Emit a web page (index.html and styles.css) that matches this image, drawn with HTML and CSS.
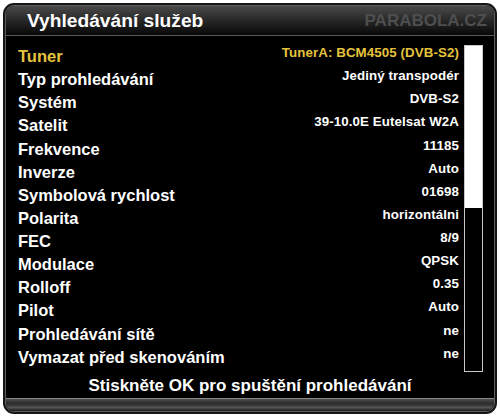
FILE: index.html
```html
<!DOCTYPE html>
<html lang="cs">
<head>
<meta charset="utf-8">
<title>Vyhledávání služeb</title>
<link rel="stylesheet" href="styles.css">
</head>
<body>
<div class="frame">
  <div class="inner">
    <div class="header">
      <span class="title">Vyhledávání služeb</span>
      <span class="brand">PARABOLA.CZ</span>
    </div>
    <div class="main">
      <div class="list">
        <div class="row active"><span class="label">Tuner</span><span class="value">TunerA: BCM4505 (DVB-S2)</span></div>
        <div class="row"><span class="label">Typ prohledávání</span><span class="value">Jediný transpodér</span></div>
        <div class="row"><span class="label">Systém</span><span class="value">DVB-S2</span></div>
        <div class="row"><span class="label">Satelit</span><span class="value">39-10.0E Eutelsat W2A</span></div>
        <div class="row"><span class="label">Frekvence</span><span class="value">11185</span></div>
        <div class="row"><span class="label">Inverze</span><span class="value">Auto</span></div>
        <div class="row"><span class="label">Symbolová rychlost</span><span class="value">01698</span></div>
        <div class="row"><span class="label">Polarita</span><span class="value">horizontálni</span></div>
        <div class="row"><span class="label">FEC</span><span class="value">8/9</span></div>
        <div class="row"><span class="label">Modulace</span><span class="value">QPSK</span></div>
        <div class="row"><span class="label">Rolloff</span><span class="value">0.35</span></div>
        <div class="row"><span class="label">Pilot</span><span class="value">Auto</span></div>
        <div class="row"><span class="label">Prohledávání sítě</span><span class="value">ne</span></div>
        <div class="row"><span class="label">Vymazat před skenováním</span><span class="value">ne</span></div>
      </div>
      <div class="scrollbar"><div class="thumb"></div></div>
    </div>
    <div class="hint">Stiskněte OK pro spuštění prohledávání</div>
    <div class="bottombar"></div>
  </div>
</div>
</body>
</html>
```

FILE: styles.css
```css
html, body {
  margin: 0;
  padding: 0;
  background: #ffffff;
}

body {
  width: 500px;
  height: 419px;
  overflow: hidden;
  font-family: "Liberation Sans", Arial, sans-serif;
  font-weight: bold;
}

.frame {
  margin: 3px;
  width: 494px;
  height: 411px;
  box-sizing: border-box;
  border: 2px solid #161616;
  border-radius: 11px;
  background: #161616;
}

.inner {
  height: 100%;
  box-sizing: border-box;
  border: 1px solid #5e5e5e;
  border-radius: 9px;
  overflow: hidden;
  background: #000000;
  display: flex;
  flex-direction: column;
}

.header {
  height: 29px;
  flex: none;
  border-bottom: 1px solid #5a5a5a;
  background: linear-gradient(#4a4a4a, #2a2a2a 45%, #080808);
  display: flex;
  align-items: center;
  justify-content: space-between;
  padding: 0 7px 0 21px;
}

.title {
  color: #ffffff;
  font-size: 19.2px;
}

.brand {
  color: #4e4e4e;
  font-size: 17px;
}

.main {
  flex: none;
  height: 327px;
  margin-top: 9px;
  padding: 0 11px 0 12px;
  display: grid;
  grid-template-columns: 1fr 19px;
  column-gap: 5px;
}

.list {
  display: grid;
  grid-auto-rows: 23.14px;
  align-content: start;
}

.row {
  display: flex;
  justify-content: space-between;
  align-items: flex-start;
  color: #ffffff;
}

.label {
  font-size: 16.5px;
  line-height: 23.14px;
}

.value {
  font-size: 13.3px;
  letter-spacing: 0.1px;
  line-height: 16px;
}

.row.active {
  color: #e6c33c;
}

.scrollbar {
  box-sizing: border-box;
  height: 327px;
  border: 1px solid #c8c8c8;
  background: #000000;
}

.thumb {
  height: 162px;
  background: #ffffff;
}

.hint {
  flex: none;
  margin-top: 4px;
  height: 20px;
  line-height: 20px;
  text-align: center;
  color: #ffffff;
  font-size: 17px;
}

.bottombar {
  flex: none;
  margin-top: 2px;
  height: 12px;
  border-top: 1px solid #8a8a8a;
  background: linear-gradient(#505050, #2c2c2c 35%, #3a3a3a 55%, #555555 70%, #1c1c1c);
}
```
